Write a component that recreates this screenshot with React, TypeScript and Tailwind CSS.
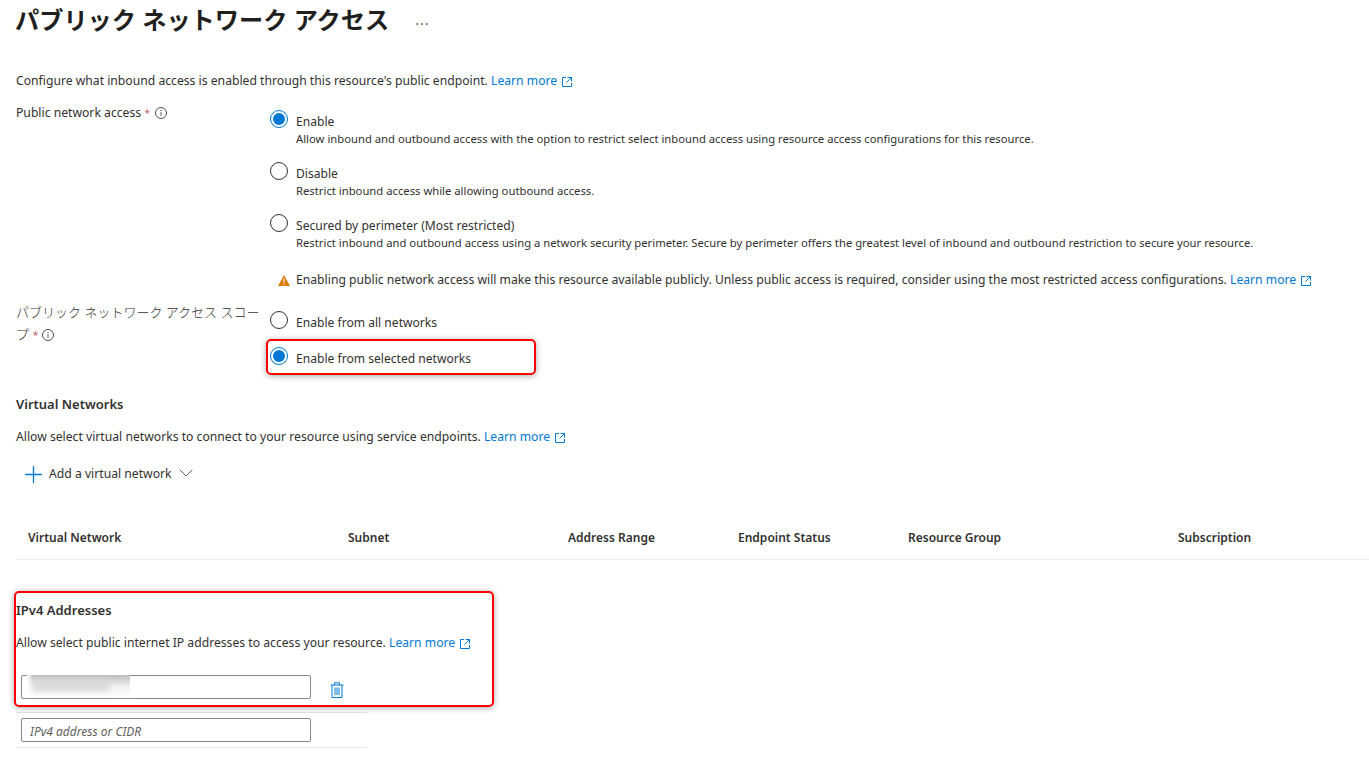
import React from 'react';
import { Plus } from 'lucide-react';

const FONT = "font-['Noto_Sans','Noto_Sans_CJK_JP',sans-serif]";

const ExternalIcon = () => (
  <svg width="10" height="10" viewBox="0 0 10 10" className="inline-block ml-[5px] text-[#0078d4]" fill="none" stroke="currentColor" strokeWidth="1">
    <path d="M4 .5H.5v9h9V6" />
    <path d="M5.5.5h4v4M9.5.5 4.5 5.5" />
  </svg>
);

const LearnMore = () => (
  <span className="text-[#0078d4] whitespace-nowrap">
    Learn more
    <ExternalIcon />
  </span>
);

const InfoIcon = () => (
  <svg width="12" height="12" viewBox="0 0 12 12" className="inline-block" fill="none" stroke="#505050" strokeWidth="1">
    <circle cx="6" cy="6" r="5.5" />
    <path d="M6 5.2v3.6" />
    <circle cx="6" cy="3.4" r=".6" fill="#505050" stroke="none" />
  </svg>
);

const Radio = ({ checked }: { checked?: boolean }) =>
  checked ? (
    <span className="w-[18px] h-[18px] rounded-full border-[1.5px] border-[#0078d4] flex items-center justify-center shrink-0">
      <span className="w-3 h-3 rounded-full bg-[#0078d4]" />
    </span>
  ) : (
    <span className="w-[18px] h-[18px] rounded-full border border-[#323130] shrink-0" />
  );

const RadioOption = ({ label, desc, checked, className }: { label: string; desc?: string; checked?: boolean; className?: string }) => (
  <div className={`flex items-start gap-[8px] ${className ?? ''}`}>
    <Radio checked={checked} />
    <div className="pt-[3px]">
      <div className="leading-[18px] text-[#323130] text-[12.1px]">{label}</div>
      {desc && <div className="text-[11.28px] leading-[18px] -mt-[1px] text-[#323130]">{desc}</div>}
    </div>
  </div>
);

const columns = [
  { name: 'Virtual Network', w: 'w-[320px]' },
  { name: 'Subnet', w: 'w-[220px]' },
  { name: 'Address Range', w: 'w-[170px]' },
  { name: 'Endpoint Status', w: 'w-[170px]' },
  { name: 'Resource Group', w: 'w-[270px]' },
  { name: 'Subscription', w: 'w-[190px]' },
];

const App: React.FC = () => {
  return (
    <div className={`relative w-[1369px] h-[767px] overflow-hidden bg-white pl-4 text-[12.18px] text-[#323130] ${FONT}`}>
      {/* Title */}
      <div className="flex items-center h-[40px]">
        <h1 className="text-[24.2px] font-bold text-[#201f1e] leading-none -ml-[1px]">パブリック ネットワーク アクセス</h1>
        <span className="ml-[26px] text-[#605e5c] text-[14px] leading-none tracking-[1px]">...</span>
      </div>

      <p className="mt-[32px] leading-[18px]">
        Configure what inbound access is enabled through this resource's public endpoint. <LearnMore />
      </p>

      {/* Public network access */}
      <div className="flex mt-[13px]">
        <div className="w-[254px] leading-[18px]">
          Public network access <span className="text-[#a4262c] text-[11px] font-light">*</span> <span className="ml-[1px] align-[1px]"><InfoIcon /></span>
        </div>
        <div className="flex-1">
          <RadioOption checked label="Enable" desc="Allow inbound and outbound access with the option to restrict select inbound access using resource access configurations for this resource." className="mt-[7px]" />
          <RadioOption label="Disable" desc="Restrict inbound access while allowing outbound access." className="mt-[14px]" />
          <RadioOption label="Secured by perimeter (Most restricted)" desc="Restrict inbound and outbound access using a network security perimeter. Secure by perimeter offers the greatest level of inbound and outbound restriction to secure your resource." className="mt-[14px]" />
          <div className="flex items-center gap-[6px] mt-[19px] ml-[8px] leading-[18px]">
            <svg width="12" height="11" viewBox="0 0 12 11" className="shrink-0">
              <path d="M6 0 12 11H0Z" fill="#d87a00" />
              <path d="M6 3.5v4M6 8.5v1.2" stroke="#fff" strokeWidth="1.1" />
            </svg>
            <span className="whitespace-nowrap">
              Enabling public network access will make this resource available publicly. Unless public access is required, consider using the most restricted access configurations. <LearnMore />
            </span>
          </div>
        </div>
      </div>

      {/* Scope */}
      <div className="flex mt-[22px]">
        <div className="w-[254px] h-[36px] leading-[21px] text-[13px] -mt-[9px] font-light">
          パブリック ネットワーク アクセス スコープ <span className="text-[#a4262c] text-[11px]">*</span> <span className="align-[1px]"><InfoIcon /></span>
        </div>
        <div className="flex-1">
          <RadioOption label="Enable from all networks" />
          <RadioOption checked label="Enable from selected networks" className="mt-[15px]" />
        </div>
      </div>

      {/* Virtual networks */}
      <h2 className="mt-[27px] font-semibold leading-[18px] text-[#323130] text-[13px]">Virtual Networks</h2>
      <p className="mt-[15px] leading-[18px]">
        Allow select virtual networks to connect to your resource using service endpoints. <LearnMore />
      </p>
      <div className="flex items-center mt-[18px] ml-1 h-[20px]">
        <Plus size={27} strokeWidth={1.2} className="text-[#0078d4] shrink-0" />
        <span className="ml-[2px]">Add a virtual network</span>
        <svg width="14" height="8" viewBox="0 0 14 8" className="ml-[7px] -mt-[2px]" fill="none" stroke="#605e5c" strokeWidth="1">
          <path d="M.7.7 7 7l6.3-6.3" />
        </svg>
      </div>

      <div className="flex mt-[45px] h-[31px] border-b border-[#edebe9] font-semibold text-[12px]">
        {columns.map((c) => (
          <div key={c.name} className={`${c.w} pl-3 leading-[18px] shrink-0`}>
            {c.name}
          </div>
        ))}
      </div>

      {/* IPv4 */}
      <h2 className="mt-[41px] font-semibold leading-[18px] text-[13px]">IPv4 Addresses</h2>
      <p className="mt-[15px] leading-[18px]">
        Allow select public internet IP addresses to access your resource. <LearnMore />
      </p>
      <div className="w-[351px] h-[39px] mt-[22px] border-b border-[#e5e5e5] flex items-start pl-[5px]">
        <div className="relative w-[290px] h-[24px] border border-[#8a8886] rounded-[2px] mt-[1px] bg-white">
          {/* blurred out address */}
          <div className="absolute left-[5px] -top-[1px] w-[103px] h-[22px] overflow-hidden bg-linear-to-b from-[#bdbdbd] via-[#f0f0f0] to-white">
            <div className="absolute left-[6px] top-[7px] w-[76px] h-[9px] bg-[#d6d6d6] blur-[3px]" />
            <div className="absolute left-0 top-0 w-[6px] h-[22px] bg-linear-to-r from-white to-transparent" />
          </div>
        </div>
        <svg width="14" height="16" viewBox="0 0 14 16" className="ml-[19px] mt-[8px]" fill="none" stroke="#0078d4" strokeWidth="1">
          <path d="M.5 3h13M4.5 3V.8h5V3M2 3v12.5h10V3M5 5.5v7.5M7 5.5v7.5M9 5.5v7.5" />
        </svg>
      </div>
      <div className="w-[351px] h-[35px] border-b border-[#e5e5e5] pl-[5px] pt-[5px]">
        <input
          readOnly
          placeholder="IPv4 address or CIDR"
          className="w-[290px] h-[24px] border border-[#8a8886] rounded-[2px] px-2 pt-[2px] italic text-[12px] placeholder:text-[#605e5c] outline-none"
        />
      </div>

      {/* Red highlight boxes drawn on top of the form */}
      <div className="absolute left-[266px] top-[339px] w-[270px] h-[36px] border-2 border-[#ff0000] rounded-[5px] shadow-[0_1px_6px_rgba(0,0,0,0.35)] pointer-events-none" />
      <div className="absolute left-[14px] top-[591px] w-[480px] h-[116px] border-2 border-[#ff0000] rounded-[5px] shadow-[0_1px_6px_rgba(0,0,0,0.35)] pointer-events-none" />
    </div>
  );
};

export default App;
